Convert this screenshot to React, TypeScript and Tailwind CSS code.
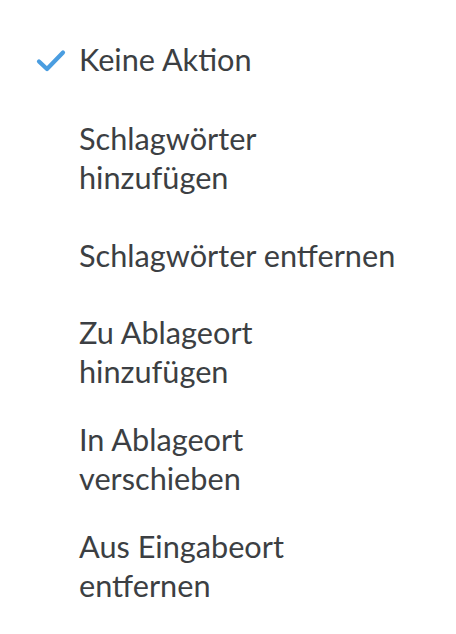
import React from "react";

const items: { label: string; checked?: boolean; mt: string }[] = [
  { label: "Keine Aktion", checked: true, mt: "mt-0" },
  { label: "Schlagwörter hinzufügen", mt: "mt-[40px]" },
  { label: "Schlagwörter entfernen", mt: "mt-[39px]" },
  { label: "Zu Ablageort hinzufügen", mt: "mt-[38px]" },
  { label: "In Ablageort verschieben", mt: "mt-[29px]" },
  { label: "Aus Eingabeort entfernen", mt: "mt-[29px]" },
];

function Check() {
  return (
    <svg width="30" height="24" viewBox="0 0 30 24" fill="none">
      <path
        d="M3 12.5 L11 20 L27 3.5"
        stroke="#4a9de0"
        strokeWidth="4.2"
        strokeLinecap="round"
        strokeLinejoin="round"
      />
    </svg>
  );
}

export default function App() {
  return (
    <div className="w-[456px] h-[634px] bg-white pt-[40px] pl-[36px] font-['Lato',sans-serif] text-[#3c3f43]">
      {items.map((it) => (
        <div key={it.label} className={`flex ${it.mt}`}>
          <div className="w-[43px] shrink-0 flex items-start pt-[9px]">
            {it.checked ? <Check /> : null}
          </div>
          <div className="w-[322px] text-[30.7px] leading-[39px]">{it.label}</div>
        </div>
      ))}
    </div>
  );
}
